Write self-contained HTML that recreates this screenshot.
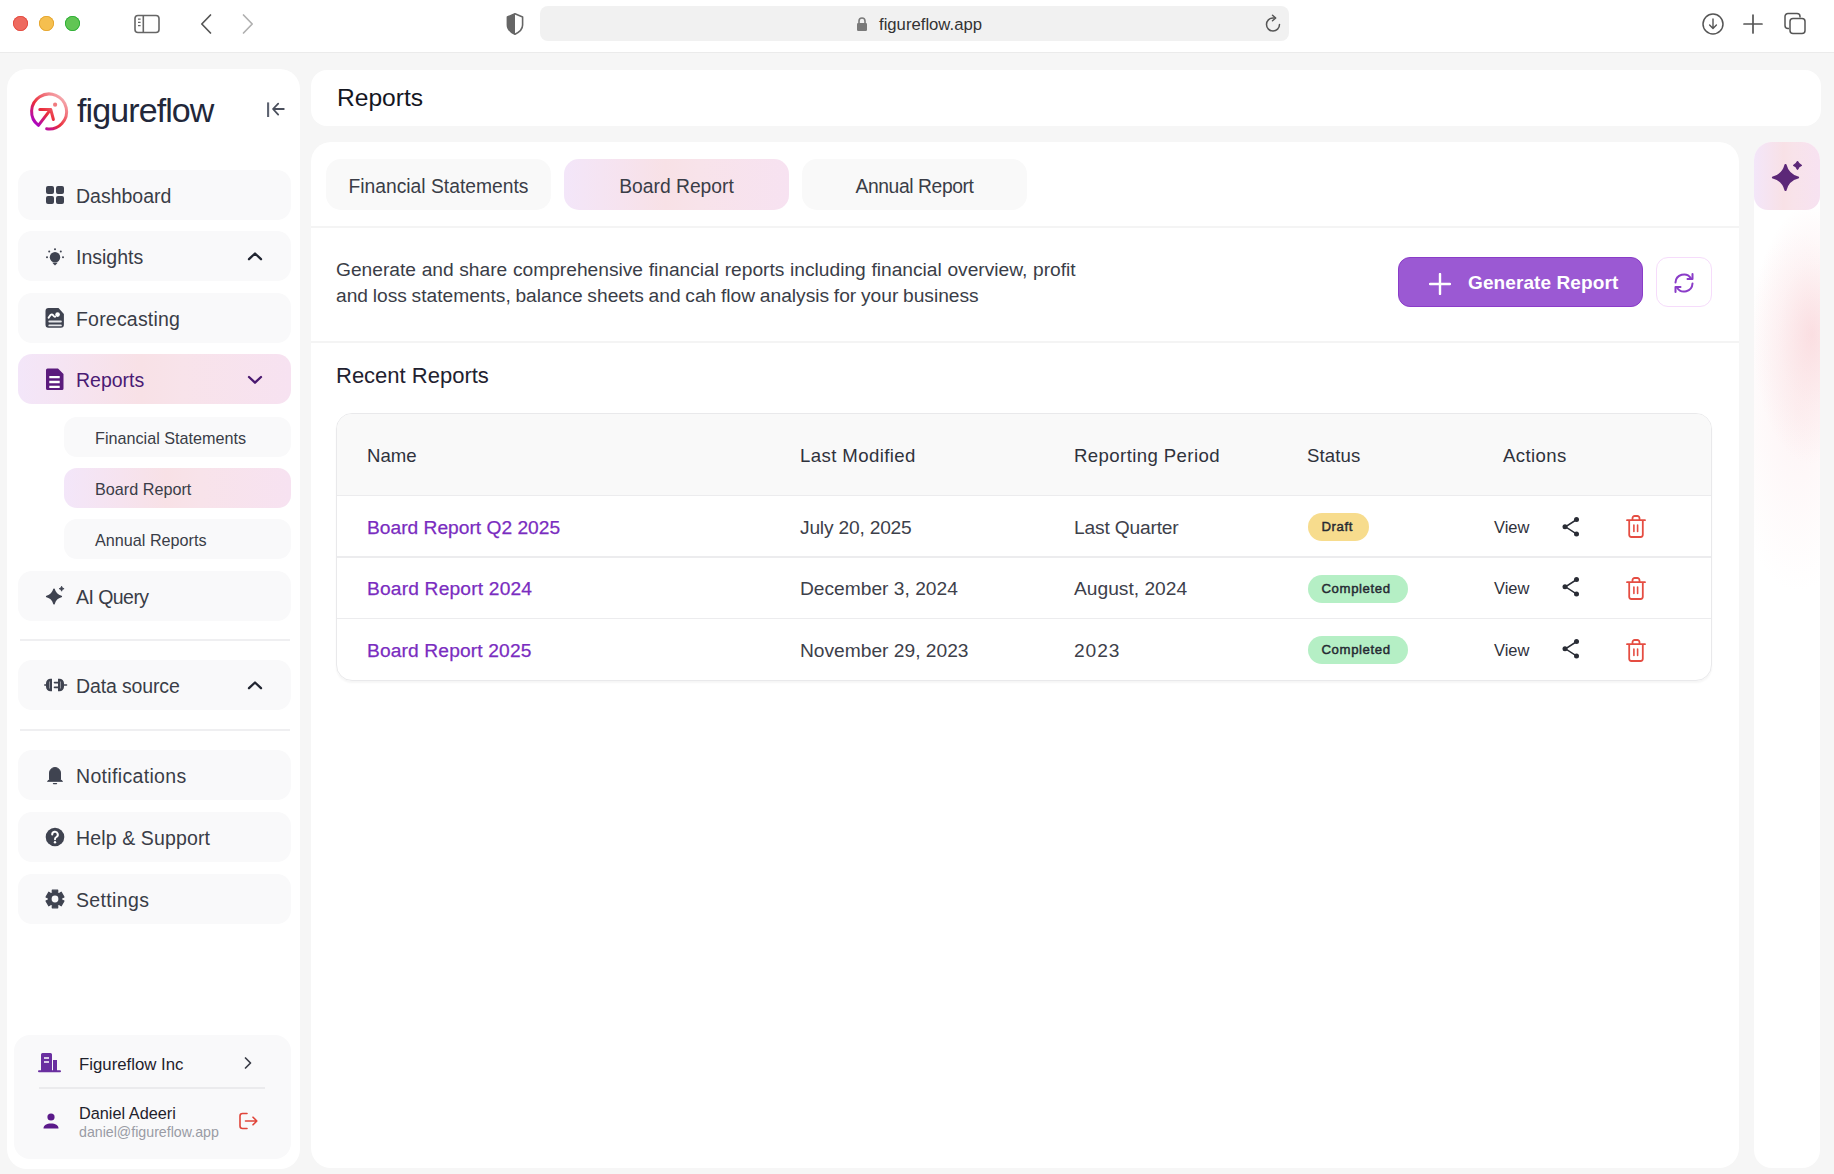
<!DOCTYPE html>
<html><head><meta charset="utf-8">
<style>
*{margin:0;padding:0;box-sizing:border-box}
html,body{width:1834px;height:1174px;overflow:hidden;background:#f6f6f6;font-family:"Liberation Sans",sans-serif;color:#2a2d36}
.abs{position:absolute}
#toolbar{position:absolute;left:0;top:0;width:1834px;height:53px;background:#fff;border-bottom:1px solid #ebebeb}
.tl{position:absolute;top:16px;width:15px;height:15px;border-radius:50%}
#urlbar{position:absolute;left:540px;top:6px;width:749px;height:35px;background:#f1f1f1;border-radius:8px}
#sidebar{position:absolute;left:7px;top:69px;width:293px;height:1100px;background:#fff;border-radius:20px}
.nav{position:absolute;left:11px;width:273px;height:50px;background:#f9f9fa;border-radius:14px}
.nav .lbl{position:absolute;left:58px;top:1px;line-height:50px;font-size:19.5px;color:#3a3d47}
.nav svg{position:absolute}
.sub{position:absolute;left:57px;width:227px;height:40px;background:#f9f9fa;border-radius:13px}
.sub .lbl{position:absolute;left:31px;top:0.5px;line-height:40px;font-size:16.2px;color:#3a3d47}
.grad{background:linear-gradient(90deg,#f3e6f9 0%,#f6e3ef 25%,#f8e1e6 45%,#f8e3ea 60%,#f7e2f1 100%)}
.divider{position:absolute;left:12.5px;width:270px;height:1.6px;background:#efeff1}
#header{position:absolute;left:311px;top:70px;width:1510px;height:56px;background:#fff;border-radius:16px}
#main{position:absolute;left:311px;top:142px;width:1428px;height:1026px;background:#fff;border-radius:20px}
#right{position:absolute;left:1754px;top:142px;width:66px;height:1026px;background:#fff;border-radius:18px;overflow:hidden}
.tab{position:absolute;top:17px;width:225px;height:51px;border-radius:15px;background:#f9f9f9;text-align:center;line-height:51px;padding-top:2px;font-size:19.3px;color:#3a3d47}
.tab.grad{background:linear-gradient(90deg,#f3e6f9 0%,#f6e3ef 25%,#f8e1e6 45%,#f8e3ea 60%,#f7e2f1 100%)}
.hline{position:absolute;left:0;width:1428px;height:2px;background:#f4f4f4}
.desc{position:absolute;left:25px;top:115px;font-size:19.2px;line-height:26px;color:#3a3d47;white-space:nowrap}
.genbtn{position:absolute;left:1087px;top:115px;width:245px;height:50px;background:#9b59d3;border:1px solid #8a3cc8;border-radius:12px;color:#fff}
.genbtn span{position:absolute;left:69px;top:0;line-height:49px;font-size:19px;font-weight:700;letter-spacing:0.1px}
.refbtn{position:absolute;left:1345px;top:115px;width:56px;height:50px;border:1.5px solid #f6dcfb;border-radius:12px;background:#fff}
.recent{position:absolute;left:25px;top:220px;font-size:22px;line-height:28px;color:#1f2230}
#table{position:absolute;left:25px;top:271px;width:1376px;height:268px;border:1.5px solid #e9e9eb;border-radius:16px;overflow:hidden;box-shadow:0 2px 2px rgba(0,0,0,0.04)}
.thead{position:absolute;left:0;top:0;width:100%;height:81px;background:#f9f9f9}
.rowline{position:absolute;left:0;width:100%;height:1.5px;background:#ececee}
.th{position:absolute;top:1px;margin-left:-1px;line-height:82px;font-size:18.6px;letter-spacing:0.4px;color:#2f323c}
.td{position:absolute;margin-left:-1px;line-height:61px;font-size:19.2px;color:#3d404a}
.td.link{color:#7a2cc0;-webkit-text-stroke:0.25px #7a2cc0}
.badge{position:absolute;height:28px;border-radius:14px;font-size:13.2px;font-weight:400;-webkit-text-stroke:0.45px #262a33;letter-spacing:0.6px;line-height:27px;padding-left:13.5px;color:#262a33}
.draft{background:#f7dc8d}
.done{background:#b5efc5}
.view{position:absolute;line-height:61px;font-size:16.5px;color:#2f323c}
.htitle{position:absolute;left:26px;top:0;line-height:56px;font-size:24.6px;color:#14161f}
.urltext{position:absolute;left:339px;top:1px;line-height:36px;font-size:16.7px;color:#333}
.logo{position:absolute;left:70px;top:21px;font-size:34px;line-height:40px;letter-spacing:-0.9px;color:#22273a}
.ucard{position:absolute;left:7px;top:966px;width:277px;height:124px;background:#f9f9fa;border-radius:16px}
.uname1{position:absolute;left:65px;top:19px;font-size:16.8px;line-height:22px;color:#1f222c}
.udiv{position:absolute;left:25px;top:52px;width:226px;height:2px;background:#ebebed}
.uname2{position:absolute;left:65px;top:67px;font-size:16.3px;line-height:22px;color:#1f222c}
.uemail{position:absolute;left:65px;top:88px;font-size:14.2px;line-height:18px;color:#9a9ca5}
#right .aibtn{position:absolute;left:0;top:0;width:66px;height:68px;border-radius:14px}
.blob{position:absolute;left:0;top:0;width:66px;height:1026px;background:radial-gradient(ellipse 60px 130px at 58px 192px,rgba(246,190,196,0.45),rgba(246,190,196,0.16) 55%,rgba(246,190,196,0) 100%),radial-gradient(ellipse 70px 180px at 44px 270px,rgba(248,205,210,0.22),rgba(248,205,210,0) 100%)}
</style></head>
<body>
<div id="toolbar">
  <div class="tl" style="left:13px;background:#ee6a5f;box-shadow:inset 0 0 0 0.8px #e2463b"></div>
  <div class="tl" style="left:39px;background:#f5bf4f;box-shadow:inset 0 0 0 0.8px #e3a22a"></div>
  <div class="tl" style="left:65px;background:#61c554;box-shadow:inset 0 0 0 0.8px #25ab30"></div>
  <div id="urlbar">
    <svg class="abs" style="left:316px;top:10px" width="12" height="16" viewBox="0 0 12 16"><path d="M3 7V5a3 3 0 0 1 6 0v2" fill="none" stroke="#7a7a7a" stroke-width="1.6"/><rect x="1" y="7" width="10" height="8" rx="1.2" fill="#7a7a7a"/></svg>
    <div class="urltext">figureflow.app</div>
    <svg class="abs" style="left:722px;top:7px" width="22" height="22" viewBox="0 0 22 22"><path d="M17.5 11.5a6.5 6.5 0 1 1-6.5-6.5h2" fill="none" stroke="#555" stroke-width="1.5" stroke-linecap="round"/><path d="M10.5 2.2l3.2 2.8-3.2 2.8" fill="none" stroke="#555" stroke-width="1.5" stroke-linecap="round" stroke-linejoin="round"/></svg>
  </div>
  <svg class="abs" style="left:133px;top:13px" width="28" height="22" viewBox="0 0 28 22"><rect x="2" y="2.5" width="24" height="17" rx="3" fill="none" stroke="#666" stroke-width="1.6"/><path d="M10.3 2.5v17" stroke="#666" stroke-width="1.6"/><path d="M5 6.2h2.6M5 9.4h2.6M5 12.6h2.6" stroke="#666" stroke-width="1.3"/></svg>
  <svg class="abs" style="left:198px;top:12px" width="16" height="24" viewBox="0 0 16 24"><path d="M12.5 3L3.8 12l8.7 9" fill="none" stroke="#555" stroke-width="1.7" stroke-linecap="round" stroke-linejoin="round"/></svg>
  <svg class="abs" style="left:240px;top:12px" width="16" height="24" viewBox="0 0 16 24"><path d="M3.5 3l8.7 9-8.7 9" fill="none" stroke="#b0b0b0" stroke-width="1.7" stroke-linecap="round" stroke-linejoin="round"/></svg>
  <svg class="abs" style="left:504px;top:12px" width="22" height="24" viewBox="0 0 22 24"><path d="M11 1.8l7.6 3.2v8c0 4.2-3.4 7.2-7.6 9.2C6.8 20.2 3.4 17.2 3.4 13V5z" fill="none" stroke="#666" stroke-width="1.6" stroke-linejoin="round"/><path d="M11 1.8L3.4 5v8c0 4.2 3.4 7.2 7.6 9.2z" fill="#666"/></svg>
  <svg class="abs" style="left:1700px;top:11px" width="26" height="26" viewBox="0 0 26 26"><circle cx="13" cy="13" r="10" fill="none" stroke="#555" stroke-width="1.5"/><path d="M13 8v9M9.6 14l3.4 3.4 3.4-3.4" fill="none" stroke="#555" stroke-width="1.4" stroke-linecap="round" stroke-linejoin="round"/></svg>
  <svg class="abs" style="left:1741px;top:12px" width="24" height="24" viewBox="0 0 24 24"><path d="M12 3v18M3 12h18" stroke="#555" stroke-width="1.7" stroke-linecap="round"/></svg>
  <svg class="abs" style="left:1782px;top:11px" width="26" height="26" viewBox="0 0 26 26"><path d="M7 17.5h-1a3 3 0 0 1-3-3V5.5a3 3 0 0 1 3-3h9a3 3 0 0 1 3 3v1" fill="none" stroke="#555" stroke-width="1.5"/><rect x="8" y="7.5" width="15" height="15" rx="3" fill="none" stroke="#555" stroke-width="1.5"/></svg>
</div>

<div id="sidebar">
  <svg class="abs" style="left:17px;top:17px" width="50" height="50" viewBox="0 0 50 50">
    <defs><linearGradient id="lg" gradientUnits="userSpaceOnUse" x1="10" y1="42" x2="42" y2="8"><stop offset="0.05" stop-color="#a400d0"/><stop offset="0.4" stop-color="#ea2c3a"/><stop offset="1" stop-color="#f8c6c8"/></linearGradient></defs>
    <path d="M22.66 42.83A17.5 17.5 0 1 0 14.45 39.38L26.3 23.8M15.8 23.6H26.8L29.4 33.5" fill="none" stroke="url(#lg)" stroke-width="3" stroke-linecap="round" stroke-linejoin="round"/>
    <circle cx="31.1" cy="18.7" r="2.1" fill="#f07a7e"/>
  </svg>
  <div class="logo">figureflow</div>
  <svg class="abs" style="left:259px;top:30px" width="20" height="20" viewBox="0 0 20 20"><path d="M2.1 3.4v14.6" stroke="#5c6270" stroke-width="2.1" stroke-linecap="butt"/><path d="M17.8 10H7.2M12.2 4.6L7 10l5.2 5.6" fill="none" stroke="#4a4f5c" stroke-width="1.8" stroke-linecap="round" stroke-linejoin="round"/></svg>

  <div class="nav" style="top:101px">
    <svg style="left:27px;top:15px" width="20" height="20" viewBox="0 0 20 20"><rect x="1" y="1" width="8" height="8" rx="2" fill="#3f4350"/><rect x="11" y="1" width="8" height="8" rx="2" fill="#3f4350"/><rect x="1" y="11" width="8" height="8" rx="2" fill="#3f4350"/><rect x="11" y="11" width="8" height="8" rx="2" fill="#3f4350"/></svg>
    <span class="lbl">Dashboard</span></div>
  <div class="nav" style="top:162px">
    <svg style="left:26px;top:16px" width="22" height="22" viewBox="0 0 22 22"><circle cx="11" cy="10.2" r="5.2" fill="#3f4350"/><path d="M8.3 15.8h5.4L11 18.6z" fill="#3f4350"/><circle cx="11" cy="2.2" r="1" fill="#3f4350"/><circle cx="3" cy="10.2" r="1" fill="#3f4350"/><circle cx="19" cy="10.2" r="1" fill="#3f4350"/><circle cx="5.2" cy="4.6" r="1" fill="#3f4350"/><circle cx="16.8" cy="4.6" r="1" fill="#3f4350"/></svg>
    <span class="lbl">Insights</span>
    <svg style="left:229px;top:20px" width="16" height="10" viewBox="0 0 16 10"><path d="M2 8.2L8 2.5l6 5.7" fill="none" stroke="#222632" stroke-width="2.3" stroke-linecap="round" stroke-linejoin="round"/></svg></div>
  <div class="nav" style="top:224px">
    <svg style="left:26px;top:13px" width="22" height="24" viewBox="0 0 22 24"><path d="M4.5 2h10l5.4 6v10.8a3 3 0 0 1-3 3H4.5a3 3 0 0 1-3-3V5a3 3 0 0 1 3-3z" fill="#3f4350"/><path d="M4.6 11.8C6 9.5 7.2 7.8 8.4 8.6S10 11.3 11.2 10.6" fill="none" stroke="#fff" stroke-width="1.9" stroke-linecap="round"/><circle cx="13.6" cy="8.6" r="2.3" fill="#fff"/><path d="M5.3 15.5h11.6M5.3 19.4h11.6" stroke="#e6e7ea" stroke-width="1.9" stroke-linecap="round"/></svg>
    <span class="lbl" style="letter-spacing:0.2px">Forecasting</span></div>
  <div class="nav grad" style="top:285px">
    <svg style="left:27px;top:13px" width="20" height="24" viewBox="0 0 20 24"><path d="M2.5 1.5h10.5l5.5 5.5v14.5a1.5 1.5 0 0 1-1.5 1.5H2.5A1.5 1.5 0 0 1 1 21.5V3a1.5 1.5 0 0 1 1.5-1.5z" fill="#5b1a7d"/><path d="M4.3 10.2h10.4M4.3 15h10.4M4.3 19.8h10.4" stroke="#fff" stroke-width="2.3"/></svg>
    <span class="lbl" style="color:#4a1b74">Reports</span>
    <svg style="left:229px;top:21px" width="16" height="10" viewBox="0 0 16 10"><path d="M2 2l6 5.7L14 2" fill="none" stroke="#4a1870" stroke-width="2.3" stroke-linecap="round" stroke-linejoin="round"/></svg></div>
  <div class="sub" style="top:348px"><span class="lbl">Financial Statements</span></div>
  <div class="sub grad" style="top:399px"><span class="lbl">Board Report</span></div>
  <div class="sub" style="top:450px"><span class="lbl">Annual Reports</span></div>
  <div class="nav" style="top:502px">
    <svg style="left:26px;top:14px" width="22" height="22" viewBox="0 0 22 22"><path d="M10 4.2Q11.5 10 17.3 11.5Q11.5 13 10 18.8Q8.5 13 2.7 11.5Q8.5 10 10 4.2Z" fill="#3f4350" stroke="#3f4350" stroke-width="1.6" stroke-linejoin="round"/><path d="M17.6 1.2Q17.9 3.4 20.1 3.7Q17.9 4 17.6 6.2Q17.3 4 15.1 3.7Q17.3 3.4 17.6 1.2Z" fill="#3f4350" stroke="#3f4350" stroke-width="0.8" stroke-linejoin="round"/></svg>
    <span class="lbl" style="letter-spacing:-0.55px">AI Query</span></div>
  <div class="divider" style="top:570px"></div>
  <div class="nav" style="top:591px">
    <svg style="left:26px;top:15px" width="24" height="20" viewBox="0 0 24 20"><path d="M8 3.8v12.4H6.5a4.5 4.5 0 0 1-4.5-4.5V8.3a4.5 4.5 0 0 1 4.5-4.5z" fill="#3f4350"/><path d="M0.8 10h2" stroke="#3f4350" stroke-width="1.6" stroke-linecap="round"/><path d="M14 3.8v12.4h1.5a4.5 4.5 0 0 0 4.5-4.5V8.3a4.5 4.5 0 0 0-4.5-4.5z" fill="#3f4350"/><path d="M19.5 10h3M10.5 7.6h3.5M10.5 12.4h3.5" stroke="#3f4350" stroke-width="1.6" stroke-linecap="round"/><path d="M5.5 6.5v7M16.5 6.5v7" stroke="#f9f9fa" stroke-width="0.9" opacity="0.5"/></svg>
    <span class="lbl" style="letter-spacing:-0.14px">Data source</span>
    <svg style="left:229px;top:20px" width="16" height="10" viewBox="0 0 16 10"><path d="M2 8.2L8 2.5l6 5.7" fill="none" stroke="#222632" stroke-width="2.3" stroke-linecap="round" stroke-linejoin="round"/></svg></div>
  <div class="divider" style="top:660px"></div>
  <div class="nav" style="top:681px">
    <svg style="left:26px;top:14px" width="22" height="22" viewBox="0 0 22 22"><path d="M5.5 15.5V9a5.5 5.5 0 0 1 11 0v6.5l2 1.8H3.5z" fill="#3f4350" stroke="#3f4350" stroke-width="1" stroke-linejoin="round"/><path d="M9.5 19.6h3" stroke="#3f4350" stroke-width="1.4" stroke-linecap="round"/></svg>
    <span class="lbl" style="letter-spacing:0.33px">Notifications</span></div>
  <div class="nav" style="top:743px">
    <svg style="left:26px;top:14px" width="22" height="22" viewBox="0 0 22 22"><circle cx="11" cy="11" r="9.3" fill="#3f4350"/><path d="M8.2 8.6a2.8 2.8 0 1 1 4.2 2.4c-.9.5-1.4 1-1.4 2.2" fill="none" stroke="#fff" stroke-width="2" stroke-linecap="round"/><circle cx="11" cy="16.2" r="1.2" fill="#fff"/></svg>
    <span class="lbl" style="letter-spacing:0.13px">Help &amp; Support</span></div>
  <div class="nav" style="top:805px">
    <svg style="left:26px;top:14px" width="22" height="22" viewBox="0 0 22 22"><path d="M8.31 4.97 L8.28 2.21 L13.72 2.21 L13.69 4.97 L14.87 5.66 L17.25 4.25 L19.97 8.96 L17.56 10.32 L17.56 11.68 L19.97 13.04 L17.25 17.75 L14.87 16.34 L13.69 17.03 L13.72 19.79 L8.28 19.79 L8.31 17.03 L7.13 16.34 L4.75 17.75 L2.03 13.04 L4.44 11.68 L4.44 10.32 L2.03 8.96 L4.75 4.25 L7.13 5.66Z" fill="#3f4350" stroke="#3f4350" stroke-width="1.2" stroke-linejoin="round"/><circle cx="11" cy="11" r="3.4" fill="#f9f9fa"/></svg>
    <span class="lbl" style="letter-spacing:0.35px">Settings</span></div>

  <div class="ucard">
    <svg class="abs" style="left:24px;top:17px" width="24" height="22" viewBox="0 0 24 22"><path d="M3 2.5a1.5 1.5 0 0 1 1.5-1.5h8a1.5 1.5 0 0 1 1.5 1.5V19H3z" fill="#6a2fa0"/><path d="M15 8h4v11h-4z" fill="#6a2fa0"/><path d="M1 19.2h21" stroke="#6a2fa0" stroke-width="2" stroke-linecap="round"/><path d="M6 6h5M6 10h5" stroke="#fff" stroke-width="1.5"/><path d="M16.5 12v5" stroke="#fff" stroke-width="1" opacity="0"/></svg>
    <div class="uname1">Figureflow Inc</div>
    <svg class="abs" style="left:228px;top:20px" width="12" height="16" viewBox="0 0 12 16"><path d="M3.5 3l5 5-5 5" fill="none" stroke="#3a3d47" stroke-width="1.7" stroke-linecap="round" stroke-linejoin="round"/></svg>
    <div class="udiv"></div>
    <svg class="abs" style="left:27px;top:77px" width="20" height="18" viewBox="0 0 20 18"><circle cx="10" cy="5" r="3.6" fill="#5b1a8a"/><path d="M2.5 16.5c0-3.5 3.2-5 7.5-5s7.5 1.5 7.5 5z" fill="#5b1a8a"/></svg>
    <div class="uname2">Daniel Adeeri</div>
    <div class="uemail">daniel@figureflow.app</div>
    <svg class="abs" style="left:223px;top:75px" width="22" height="22" viewBox="0 0 22 22"><path d="M10 3.5H5.5a2.5 2.5 0 0 0-2.5 2.5v10a2.5 2.5 0 0 0 2.5 2.5H10" fill="none" stroke="#e0453a" stroke-width="1.6" stroke-linecap="round"/><path d="M8.5 11h11M16 7.2l3.8 3.8-3.8 3.8" fill="none" stroke="#e0453a" stroke-width="1.6" stroke-linecap="round" stroke-linejoin="round"/></svg>
  </div>
</div>

<div id="header"><div class="htitle">Reports</div></div>
<div id="main">
  <div class="tab" style="left:15px">Financial Statements</div>
  <div class="tab grad" style="left:253px">Board Report</div>
  <div class="tab" style="left:491px;letter-spacing:-0.4px">Annual Report</div>
  <div class="hline" style="top:84px"></div>
  <div class="desc"><span style="word-spacing:0.3px">Generate and share comprehensive financial reports including financial overview, profit</span><br><span style="word-spacing:-0.62px">and loss statements, balance sheets and cah flow analysis for your business</span></div>
  <div class="genbtn"><svg class="abs" style="left:30px;top:15px" width="22" height="22" viewBox="0 0 22 22"><path d="M11 1v20M1 11h20" stroke="#fff" stroke-width="2.4" stroke-linecap="round"/></svg><span>Generate Report</span></div>
  <div class="refbtn"><svg class="abs" style="left:14px;top:12px" width="26" height="26" viewBox="0 0 26 26"><path d="M4.5 12.5A8.5 8.5 0 0 1 20 8.2" fill="none" stroke="#8a3cc8" stroke-width="2" stroke-linecap="round"/><path d="M21.5 4v5h-5" fill="none" stroke="#8a3cc8" stroke-width="2" stroke-linecap="round" stroke-linejoin="round"/><path d="M21.5 13.5A8.5 8.5 0 0 1 6 17.8" fill="none" stroke="#8a3cc8" stroke-width="2" stroke-linecap="round"/><path d="M4.5 22v-5h5" fill="none" stroke="#8a3cc8" stroke-width="2" stroke-linecap="round" stroke-linejoin="round"/></svg></div>
  <div class="hline" style="top:199px"></div>
  <div class="recent">Recent Reports</div>
  <div id="table">
    <div class="thead"></div>
    <div class="rowline" style="top:80.5px"></div>
    <div class="rowline" style="top:142px"></div>
    <div class="rowline" style="top:203.5px"></div>
    <div class="th" style="left:31px;letter-spacing:0">Name</div>
    <div class="th" style="left:464px">Last Modified</div>
    <div class="th" style="left:738px">Reporting Period</div>
    <div class="th" style="left:971px;letter-spacing:0.1px">Status</div>
    <div class="th" style="left:1167px">Actions</div>

    <div class="td link" style="left:31px;top:83px">Board Report Q2 2025</div>
    <div class="td" style="left:464px;top:83px;letter-spacing:-0.2px">July 20, 2025</div>
    <div class="td" style="left:738px;top:83px;letter-spacing:-0.18px">Last Quarter</div>
    <div class="badge draft" style="left:971px;top:99px;width:61px">Draft</div>
    <div class="view" style="left:1157px;top:83px">View</div>

    <div class="td link" style="left:31px;top:144px;letter-spacing:0.18px">Board Report 2024</div>
    <div class="td" style="left:464px;top:144px">December 3, 2024</div>
    <div class="td" style="left:738px;top:144px">August, 2024</div>
    <div class="badge done" style="left:971px;top:161px;width:100px">Completed</div>
    <div class="view" style="left:1157px;top:144px">View</div>

    <div class="td link" style="left:31px;top:206px;letter-spacing:0.14px">Board Report 2025</div>
    <div class="td" style="left:464px;top:206px">November 29, 2023</div>
    <div class="td" style="left:738px;top:206px;letter-spacing:0.9px">2023</div>
    <div class="badge done" style="left:971px;top:222px;width:100px">Completed</div>
    <div class="view" style="left:1157px;top:206px">View</div>
<svg class="abs" style="left:1223px;top:101px" width="22" height="24" viewBox="0 0 22 24"><path d="M16 5L5.5 11.8 16 18.6" fill="none" stroke="#2a2d36" stroke-width="1.5"/><circle cx="16.5" cy="4.6" r="2.5" fill="#2a2d36"/><circle cx="5" cy="11.8" r="2.5" fill="#2a2d36"/><circle cx="16.5" cy="19" r="2.5" fill="#2a2d36"/></svg>
<svg class="abs" style="left:1287px;top:100px" width="24" height="26" viewBox="0 0 24 26"><path d="M3 6.2h18" stroke="#e54d42" stroke-width="1.8" stroke-linecap="round"/><path d="M8.5 6V4.2A2.2 2.2 0 0 1 10.7 2h2.6a2.2 2.2 0 0 1 2.2 2.2V6" fill="none" stroke="#e54d42" stroke-width="1.8"/><path d="M5.2 6.5v14.3A2.2 2.2 0 0 0 7.4 23h9.2a2.2 2.2 0 0 0 2.2-2.2V6.5" fill="none" stroke="#e54d42" stroke-width="1.8"/><path d="M9.9 11v6.5M13.6 11v6.5" stroke="#e54d42" stroke-width="1.6" stroke-linecap="round"/></svg>
<svg class="abs" style="left:1223px;top:161px" width="22" height="24" viewBox="0 0 22 24"><path d="M16 5L5.5 11.8 16 18.6" fill="none" stroke="#2a2d36" stroke-width="1.5"/><circle cx="16.5" cy="4.6" r="2.5" fill="#2a2d36"/><circle cx="5" cy="11.8" r="2.5" fill="#2a2d36"/><circle cx="16.5" cy="19" r="2.5" fill="#2a2d36"/></svg>
<svg class="abs" style="left:1287px;top:162px" width="24" height="26" viewBox="0 0 24 26"><path d="M3 6.2h18" stroke="#e54d42" stroke-width="1.8" stroke-linecap="round"/><path d="M8.5 6V4.2A2.2 2.2 0 0 1 10.7 2h2.6a2.2 2.2 0 0 1 2.2 2.2V6" fill="none" stroke="#e54d42" stroke-width="1.8"/><path d="M5.2 6.5v14.3A2.2 2.2 0 0 0 7.4 23h9.2a2.2 2.2 0 0 0 2.2-2.2V6.5" fill="none" stroke="#e54d42" stroke-width="1.8"/><path d="M9.9 11v6.5M13.6 11v6.5" stroke="#e54d42" stroke-width="1.6" stroke-linecap="round"/></svg>
<svg class="abs" style="left:1223px;top:223px" width="22" height="24" viewBox="0 0 22 24"><path d="M16 5L5.5 11.8 16 18.6" fill="none" stroke="#2a2d36" stroke-width="1.5"/><circle cx="16.5" cy="4.6" r="2.5" fill="#2a2d36"/><circle cx="5" cy="11.8" r="2.5" fill="#2a2d36"/><circle cx="16.5" cy="19" r="2.5" fill="#2a2d36"/></svg>
<svg class="abs" style="left:1287px;top:224px" width="24" height="26" viewBox="0 0 24 26"><path d="M3 6.2h18" stroke="#e54d42" stroke-width="1.8" stroke-linecap="round"/><path d="M8.5 6V4.2A2.2 2.2 0 0 1 10.7 2h2.6a2.2 2.2 0 0 1 2.2 2.2V6" fill="none" stroke="#e54d42" stroke-width="1.8"/><path d="M5.2 6.5v14.3A2.2 2.2 0 0 0 7.4 23h9.2a2.2 2.2 0 0 0 2.2-2.2V6.5" fill="none" stroke="#e54d42" stroke-width="1.8"/><path d="M9.9 11v6.5M13.6 11v6.5" stroke="#e54d42" stroke-width="1.6" stroke-linecap="round"/></svg>
  </div>
</div>
<div id="right">
  <div class="blob"></div>
  <div class="aibtn grad"><svg class="abs" style="left:15px;top:16px" width="36" height="36" viewBox="0 0 36 36"><path d="M16.5 7Q19 17 29 19.5Q19 22 16.5 32Q14 22 4 19.5Q14 17 16.5 7Z" fill="#5c2878" stroke="#5c2878" stroke-width="2.2" stroke-linejoin="round"/><path d="M28.5 3.6Q29.6 6.3 32.3 7.4Q29.6 8.5 28.5 11.2Q27.4 8.5 24.7 7.4Q27.4 6.3 28.5 3.6Z" fill="#5c2878" stroke="#5c2878" stroke-width="1.4" stroke-linejoin="round"/></svg></div>
</div>
</body></html>
